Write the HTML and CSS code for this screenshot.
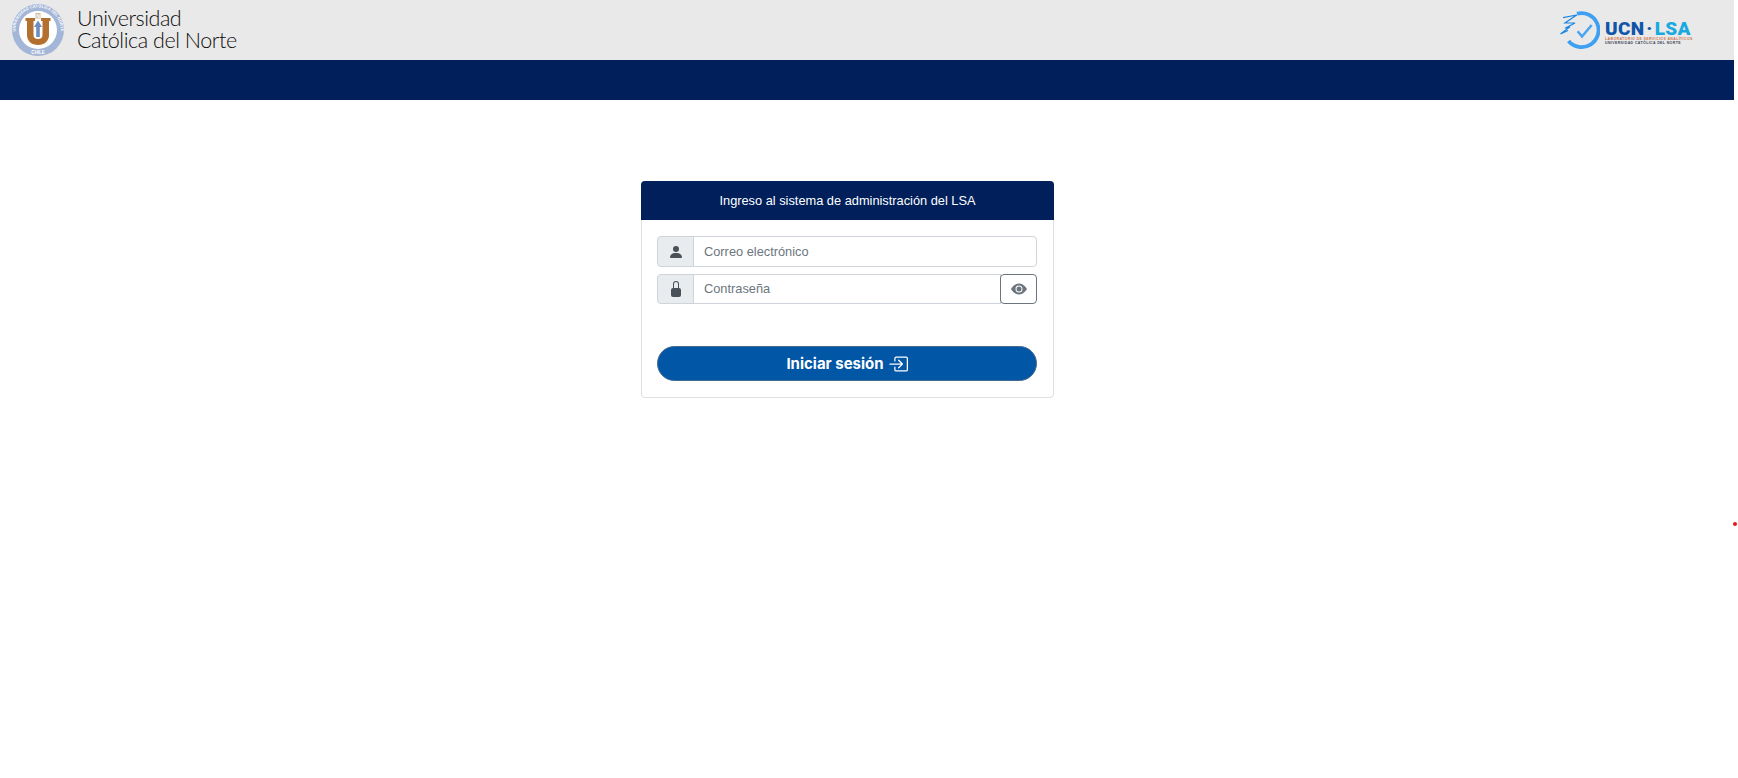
FILE: index.html
```html
<!DOCTYPE html>
<html lang="es">
<head>
    <meta charset="UTF-8">
    <meta name="viewport" content="width=device-width, initial-scale=1.0">
    <title>LSA - Ingreso</title>
    <link rel="stylesheet" href="styles.css">
</head>
<body>
    <header class="top-bar">
        <div class="ucn-brand">
            <svg class="ucn-seal" viewBox="0 0 52 52" aria-hidden="true">
                <defs>
                    <path id="sealTop" d="M9.500 41.500 A22.600 22.600 0 1 1 42.500 41.500"/>
                </defs>
                <circle cx="26" cy="26" r="26" fill="#a3b6d8"/>
                <circle cx="26" cy="26" r="19" fill="#fff"/>
                <text class="seal-text"><textPath href="#sealTop" startOffset="50%" text-anchor="middle">UNIVERSIDAD CATÓLICA DEL NORTE</textPath></text>
                <text class="seal-chile" x="26" y="50" text-anchor="middle">CHILE</text>
                <path d="M13.500 14h9.500v3h-1.500v14c0 2.500 1.500 4 4.500 4s4.500-1.500 4.500-4V17H29v-3h9.500v3H37v14c0 6-4.500 10-11 10s-11-4-11-10V17h-1.500z" fill="#b4702f"/>
                <path d="M26 16.500l4 6.500h-2.200v10h-3.600V23H22z" fill="#6d8fc0"/>
                <rect x="23.500" y="9" width="5" height="5.500" fill="#cdb797"/>
                <text class="seal-n" x="26" y="13.500" text-anchor="middle">N</text>
            </svg>
            <div class="ucn-name">Universidad<br>Católica del Norte</div>
        </div>
        <div class="lsa-brand">
            <svg class="lsa-mark" viewBox="0 0 40 40" aria-hidden="true">
                <path d="M17 3.700 A17 17 0 1 1 8.500 31" fill="none" stroke="#3f9ff2" stroke-width="3.800"/>
                <path d="M3 7.700L16.700 5 5 13h10L5 18.300l5-1.600L.5 24 8 20.500" fill="none" stroke="#1c86e4" stroke-width="1.200"/>
                <path d="M17.700 21.300L22 26.500l9.700-11.500" fill="none" stroke="#4aa5f0" stroke-width="2.500"/>
            </svg>
            <div class="lsa-words">
                <div class="lsa-title"><span class="lsa-ucn">UCN</span><span class="lsa-dot">·</span><span class="lsa-lsa">LSA</span></div>
                <div class="lsa-sub lsa-sub-red">LABORATORIO DE SERVICIOS ANALÍTICOS</div>
                <div class="lsa-sub">UNIVERSIDAD CATÓLICA DEL NORTE</div>
            </div>
        </div>
    </header>
    <div class="nav-bar"></div>

    <main class="login-card">
        <div class="login-head">Ingreso al sistema de administración del LSA</div>
        <form class="login-body">
            <div class="input-row">
                <span class="input-addon">
                    <svg class="icon" viewBox="0 0 16 16"><path d="M3 14s-1 0-1-1 1-4 6-4 6 3 6 4-1 1-1 1zm5-6a3 3 0 1 0 0-6 3 3 0 0 0 0 6"/></svg>
                </span>
                <input class="input-field input-last" type="text" placeholder="Correo electrónico">
            </div>
            <div class="input-row">
                <span class="input-addon">
                    <svg class="icon" viewBox="0 0 16 16"><path d="M8 1a2 2 0 0 1 2 2v4H6V3a2 2 0 0 1 2-2m3 6V3a3 3 0 0 0-6 0v4a2 2 0 0 0-2 2v5a2 2 0 0 0 2 2h6a2 2 0 0 0 2-2V9a2 2 0 0 0-2-2"/></svg>
                </span>
                <input class="input-field input-pass" type="password" placeholder="Contraseña">
                <button class="eye-button" type="button">
                    <svg class="icon" viewBox="0 0 16 16"><path d="M10.500 8a2.500 2.500 0 1 1-5 0 2.500 2.500 0 0 1 5 0"/><path d="M0 8s3-5.500 8-5.500S16 8 16 8s-3 5.500-8 5.500S0 8 0 8m8 3.500a3.500 3.500 0 1 0 0-7 3.500 3.500 0 0 0 0 7"/></svg>
                </button>
            </div>
            <button class="login-button" type="button">
                Iniciar sesión
                <svg class="login-icon" viewBox="0 0 16 16"><path d="M6 3.500a.5.500 0 0 1 .5-.5h8a.5.500 0 0 1 .5.500v9a.5.500 0 0 1-.5.500h-8a.5.500 0 0 1-.5-.5v-2a.5.500 0 0 0-1 0v2A1.500 1.500 0 0 0 6.500 14h8a1.500 1.500 0 0 0 1.500-1.500v-9A1.500 1.500 0 0 0 14.500 2h-8A1.500 1.500 0 0 0 5 3.500v2a.5.500 0 0 0 1 0z"/><path d="M11.854 8.354a.5.500 0 0 0 0-.708l-3-3a.5.500 0 1 0-.708.708L10.293 7.500H1.500a.5.500 0 0 0 0 1h8.793l-2.147 2.146a.5.500 0 0 0 .708.708z"/></svg>
            </button>
        </form>
    </main>

    <span class="red-dot"></span>
</body>
</html>
```

FILE: styles.css
```css
html, body {
    height: 100%;
}
body {
    font-family: 'Liberation Sans', Arial, sans-serif;
    background: #fff;
    margin: 0;
    padding: 0 4px 0 0;
    box-sizing: border-box;
    overflow: hidden;
    position: relative;
}
.top-bar {
    height: 60px;
    background: #e9e9e9;
    display: flex;
    justify-content: space-between;
    align-items: center;
}
.ucn-brand {
    display: flex;
    align-items: center;
    gap: 13px;
    padding-left: 12px;
}
.ucn-seal {
    width: 52px;
    height: 52px;
    display: block;
}
.seal-text {
    font-family: 'Liberation Sans', sans-serif;
    font-size: 4px;
    font-weight: bold;
    fill: #fff;
}
.seal-chile {
    font-family: 'Liberation Sans', sans-serif;
    font-size: 4.500px;
    font-weight: bold;
    fill: #fff;
}
.seal-n {
    font-family: 'Liberation Sans', sans-serif;
    font-size: 5px;
    font-weight: bold;
    fill: #fff;
}
.ucn-name {
    font-family: 'Lato', sans-serif;
    font-weight: 300;
    font-size: 21.500px;
    line-height: 22px;
    letter-spacing: -0.45px;
    color: #0d0d0d;
    margin-top: -2px;
}
.lsa-brand {
    display: flex;
    align-items: center;
    gap: 5px;
    margin-right: 43px;
}
.lsa-mark {
    width: 40px;
    height: 40px;
    display: block;
}
.lsa-words {
    width: 86px;
    padding-top: 5px;
}
.lsa-title {
    font-family: 'Roboto', sans-serif;
    font-weight: 900;
    font-size: 19px;
    line-height: 17px;
    letter-spacing: 0.3px;
    white-space: nowrap;
}
.lsa-ucn {
    color: #0f55a8;
}
.lsa-dot {
    color: #0f55a8;
    margin: 0 2px;
}
.lsa-lsa {
    color: #19a9e0;
}
.lsa-sub {
    font-family: 'Liberation Sans', sans-serif;
    font-weight: bold;
    font-size: 3.500px;
    line-height: 4px;
    letter-spacing: 0.4px;
    color: #3c4656;
    white-space: nowrap;
}
.lsa-sub-red {
    color: #c9744f;
}
.nav-bar {
    height: 40px;
    background: #001f5b;
}
.login-card {
    width: 413px;
    margin: 81px 0 0 641px;
    box-sizing: border-box;
    border: 1px solid #dfdfdf;
    border-radius: 4px;
    background: #fff;
}
.login-head {
    height: 39px;
    margin: -1px -1px 0;
    background: #001f5b;
    color: #fff;
    border-radius: 4px 4px 0 0;
    font-size: 12.800px;
    line-height: 40px;
    text-align: center;
}
.login-body {
    padding: 16px 16px 16px 15px;
}
.input-row {
    display: flex;
    height: 31px;
    margin-bottom: 7px;
}
.input-row + .input-row {
    height: 30px;
}
.input-addon {
    width: 37px;
    box-sizing: border-box;
    display: flex;
    align-items: center;
    justify-content: center;
    background: #e9ecef;
    border: 1px solid #ced4da;
    border-radius: 4px 0 0 4px;
    color: #495057;
}
.icon {
    width: 16px;
    height: 16px;
    fill: currentColor;
    display: block;
}
.input-field {
    flex: 1;
    min-width: 0;
    box-sizing: border-box;
    margin-left: -1px;
    padding: 0 10px;
    font-family: inherit;
    font-size: 12.800px;
    color: #495057;
    border: 1px solid #ced4da;
    outline: none;
}
.input-field::placeholder {
    color: #6c757d;
    opacity: 1;
}
.input-last {
    border-radius: 0 4px 4px 0;
}
.input-pass {
    padding-bottom: 2px;
}
.eye-button {
    width: 37px;
    box-sizing: border-box;
    margin-left: -1px;
    padding: 0;
    display: flex;
    align-items: center;
    justify-content: center;
    background: #fff;
    border: 1px solid #6c757d;
    border-radius: 4px;
    color: #6c757d;
    position: relative;
}
.login-button {
    display: flex;
    align-items: center;
    justify-content: center;
    gap: 4px;
    width: 100%;
    height: 35px;
    margin-top: 42px;
    background: #0256a6;
    border: 1px solid #45688f;
    border-radius: 18px;
    color: #fff;
    font-family: 'Inter', sans-serif;
    font-weight: 700;
    font-size: 15px;
}
.login-icon {
    width: 20px;
    height: 20px;
    fill: currentColor;
    display: block;
}
.red-dot {
    position: absolute;
    left: 1733px;
    top: 522px;
    width: 4px;
    height: 4px;
    border-radius: 50%;
    background: #e8141c;
}
```
